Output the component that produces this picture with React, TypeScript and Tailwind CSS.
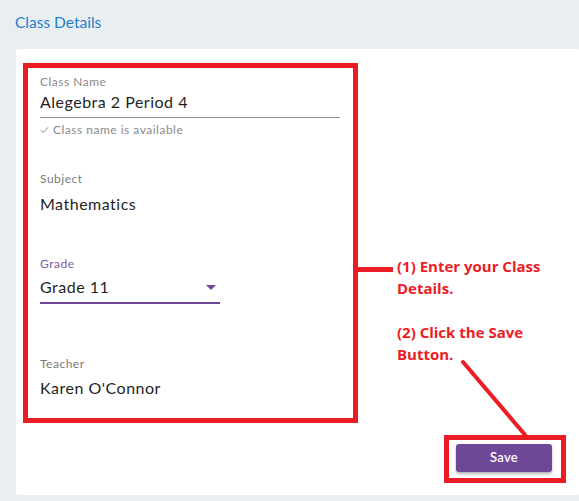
import React from "react";

const ui = { fontFamily: "Lato, 'Noto Sans', sans-serif" };
const note = { fontFamily: "'Open Sans', 'Liberation Sans', sans-serif" };

export default function App() {
  return (
    <div className="relative w-[579px] h-[501px] overflow-hidden bg-[#e9eef1]" style={ui}>
      {/* Header */}
      <div className="h-[49px] pl-[15px] pt-[12px]">
        <h1 className="text-[15.5px] leading-[20px] text-[#1d80d2]">Class Details</h1>
      </div>

      {/* Card */}
      <div className="ml-[16px] h-[446px] bg-white rounded-[3px] pl-[7px] pt-[14px] flex flex-col">
        <div className="flex">
          {/* Form fields */}
          <div className="w-[335px] h-[360px] border-[5px] border-[#ed1c24] pl-[12px] pt-[6px] flex flex-col tracking-[0.5px]">
            <label className="text-[12px] leading-[16px] text-[#8a8a8a]">Class Name</label>
            <div className="mt-[2px] text-[16px] leading-[20px] text-[#1f1f1f]">Alegebra 2 Period 4</div>
            <div className="mt-[5px] w-[300px] h-px bg-[#959595]" />
            <div className="mt-[4px] text-[12px] leading-[16px] text-[#8a8a8a] flex items-center gap-[4px]">
              <svg width="9" height="8" viewBox="0 0 9 8" fill="none">
                <path d="M0.8 4.2 L3.2 6.6 L8.2 1.2" stroke="#8a8a8a" strokeWidth="1" />
              </svg>
              Class name is available
            </div>

            <label className="mt-[33px] text-[12px] leading-[16px] text-[#7a7a7a]">Subject</label>
            <div className="mt-[7px] text-[16px] leading-[20px] text-[#1f1f1f]">Mathematics</div>

            <label className="mt-[42px] text-[12px] leading-[16px] text-[#7d59a8]">Grade</label>
            <div className="mt-[5px] w-[180px] flex items-center justify-between text-[16px] leading-[20px] text-[#1f1f1f]">
              <span>Grade 11</span>
              <svg width="10" height="5" viewBox="0 0 10 5" className="mr-[4px]">
                <path d="M0 0 H10 L5 5 Z" fill="#6f4799" />
              </svg>
            </div>
            <div className="mt-[5px] w-[180px] h-[2px] bg-[#6f4799]" />

            <label className="mt-[52px] text-[12px] leading-[16px] text-[#7a7a7a]">Teacher</label>
            <div className="mt-[6px] text-[16px] leading-[20px] text-[#1f1f1f]">Karen O'Connor</div>
          </div>

          {/* Annotation */}
          <div className="flex items-start pt-[204px]">
            <div className="w-[35px] h-[5px] bg-[#ed1c24]" />
            <div
              className="ml-[4px] -mt-[12px] text-[15px] leading-[22px] font-bold text-[#ed1c24]"
              style={note}
            >
              <p>(1) Enter your Class</p>
              <p>Details.</p>
              <p className="mt-[22px]">(2) Click the Save</p>
              <p>Button.</p>
            </div>
          </div>
        </div>

        {/* Save */}
        <div className="mt-[12px] flex justify-end pr-[13px]">
          <div className="w-[122px] h-[48px] border-[5px] border-[#ed1c24] pl-[7px] pt-[4px]">
            <button className="w-[96px] h-[28px] rounded-[3px] bg-[#6f4799] text-white text-[13px] font-semibold tracking-[0.3px] shadow-[0_2px_3px_rgba(0,0,0,0.3)]">
              Save
            </button>
          </div>
        </div>
      </div>

      {/* Arrow to save button */}
      <svg className="absolute inset-0 pointer-events-none" width="579" height="501">
        <line x1="463" y1="362" x2="526" y2="436" stroke="#ed1c24" strokeWidth="4" strokeLinecap="round" />
      </svg>
    </div>
  );
}
